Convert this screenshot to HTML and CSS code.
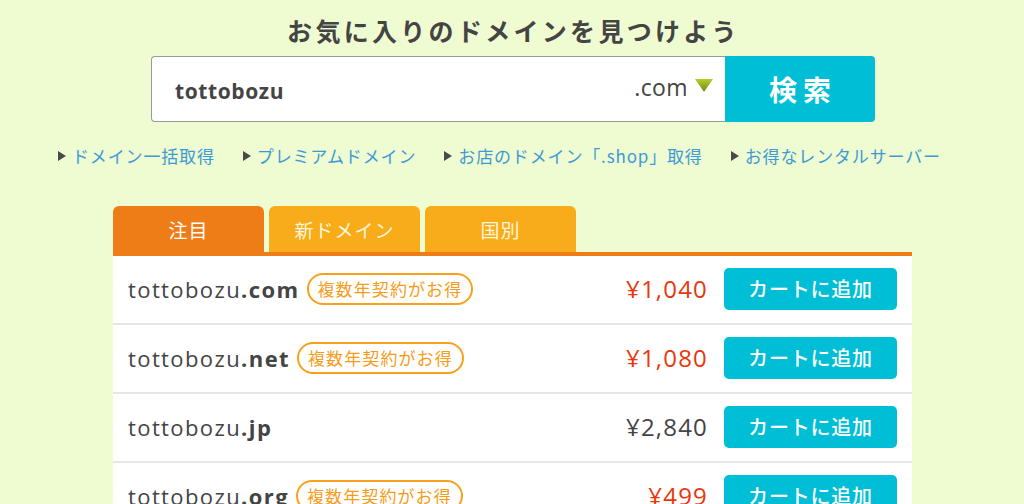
FILE: index.html
```html
<!DOCTYPE html>
<html lang="ja">
<head>
<meta charset="utf-8">
<title>ドメイン検索</title>
<link rel="stylesheet" href="styles.css">
</head>
<body>
<div class="page">
  <h1 class="title">お気に入りのドメインを見つけよう</h1>

  <form class="search">
    <div class="search-input">
      <span class="query">tottobozu</span>
      <span class="tld">.com</span>
      <svg class="tld-arrow" width="18" height="13" viewBox="0 0 18 13">
        <defs>
          <linearGradient id="g" x1="0" y1="0" x2="0" y2="1">
            <stop offset="0" stop-color="#b5cf2a"/>
            <stop offset="1" stop-color="#6f8a12"/>
          </linearGradient>
        </defs>
        <polygon points="0,0 18,0 9,13" fill="url(#g)"/>
      </svg>
    </div>
    <button type="button" class="search-btn">検索</button>
  </form>

  <ul class="links">
    <li><span class="tri"></span>ドメイン一括取得</li>
    <li><span class="tri"></span>プレミアムドメイン</li>
    <li><span class="tri"></span>お店のドメイン「.shop」取得</li>
    <li><span class="tri"></span>お得なレンタルサーバー</li>
  </ul>

  <section class="panel">
    <div class="tabs">
      <div class="tab tab-active">注目</div>
      <div class="tab">新ドメイン</div>
      <div class="tab">国別</div>
    </div>
    <div class="rows">
      <div class="row">
        <div class="domain">tottobozu<b>.com</b></div>
        <span class="badge">複数年契約がお得</span>
        <div class="price sale">¥1,040</div>
        <button type="button" class="cart">カートに追加</button>
      </div>
      <div class="row">
        <div class="domain">tottobozu<b>.net</b></div>
        <span class="badge">複数年契約がお得</span>
        <div class="price sale">¥1,080</div>
        <button type="button" class="cart">カートに追加</button>
      </div>
      <div class="row">
        <div class="domain">tottobozu<b>.jp</b></div>
        <div class="price">¥2,840</div>
        <button type="button" class="cart">カートに追加</button>
      </div>
      <div class="row">
        <div class="domain">tottobozu<b>.org</b></div>
        <span class="badge">複数年契約がお得</span>
        <div class="price sale">¥499</div>
        <button type="button" class="cart">カートに追加</button>
      </div>
    </div>
  </section>
</div>
</body>
</html>
```

FILE: styles.css
```css
* { box-sizing: border-box; }

html, body {
  margin: 0;
  padding: 0;
  height: 100%;
  overflow: hidden;
}

body {
  background: #effbd0;
  font-family: "Noto Sans CJK JP", "Open Sans", sans-serif;
  color: #444;
}

.page {
  display: flex;
  flex-direction: column;
  align-items: center;
  padding-top: 12px;
}

.title {
  margin: 0;
  font-size: 25px;
  line-height: 36px;
  font-weight: bold;
  letter-spacing: 3.3px;
  color: #444;
  text-indent: 3px;
}

.search {
  margin: 8px 0 0 2px;
  display: flex;
  width: 724px;
  height: 66px;
}

.search-input {
  flex: 1;
  display: flex;
  align-items: center;
  background: #fff;
  border: 1px solid #9a9a9a;
  border-right: none;
  border-radius: 4px 0 0 4px;
  padding: 0 12px 0 23px;
}

.query {
  flex: 1;
  font-family: "Open Sans", sans-serif;
  font-weight: bold;
  font-size: 21px;
  letter-spacing: 0.6px;
  color: #444;
  padding-top: 4px;
}

.tld {
  font-family: "Open Sans", sans-serif;
  font-size: 23px;
  letter-spacing: 0.4px;
  color: #444;
  margin-right: 7px;
  margin-top: -4px;
}

.tld-arrow {
  margin-top: -8px;
}

.search-btn {
  width: 150px;
  border: none;
  background: #00bed5;
  color: #fff;
  border-radius: 0 4px 4px 0;
  font-family: "Noto Sans CJK JP", sans-serif;
  font-weight: bold;
  font-size: 28px;
  letter-spacing: 6px;
  text-indent: 6px;
  padding: 0;
}

.links {
  list-style: none;
  margin: 22px 0 0;
  padding: 0 0 0 58px;
  align-self: stretch;
  display: flex;
  gap: 28px;
  font-size: 17px;
  line-height: 24px;
  letter-spacing: 0.85px;
  color: #3d9ad6;
}

.links li {
  display: flex;
  align-items: center;
}

.tri {
  width: 0;
  height: 0;
  border-top: 5px solid transparent;
  border-bottom: 5px solid transparent;
  border-left: 8px solid #4a4a4a;
  margin-right: 6px;
}

.panel {
  margin-top: 38px;
  width: 799px;
  margin-left: 1px;
}

.tabs {
  display: flex;
  gap: 5px;
  border-bottom: 4px solid #ef7d17;
}

.tab {
  width: 151px;
  height: 46px;
  border-radius: 6px 6px 0 0;
  background: #f8ac19;
  color: #fff6dc;
  font-size: 19px;
  letter-spacing: 1px;
  display: flex;
  align-items: center;
  justify-content: center;
}

.tab-active {
  background: #ef7d17;
  color: #fff;
}

.row {
  display: flex;
  align-items: center;
  height: 69px;
  padding: 0 15px 2px;
  background: #fff;
  border-bottom: 2px solid #e6e6e6;
}

.domain {
  font-family: "Open Sans", sans-serif;
  font-size: 22px;
  letter-spacing: 1.4px;
  color: #444;
}

.domain b {
  font-weight: bold;
}

.badge {
  margin-left: 7px;
  height: 32px;
  padding: 0 9px;
  border: 2px solid #f9a11b;
  border-radius: 16px;
  color: #f79c18;
  font-size: 17px;
  letter-spacing: 1.1px;
  display: flex;
  align-items: center;
}

.price {
  margin-left: auto;
  font-family: "Open Sans", sans-serif;
  font-size: 24px;
  letter-spacing: 1.2px;
  color: #444;
}

.price.sale {
  color: #e8370d;
}

.cart {
  margin-left: 16px;
  width: 173px;
  height: 42px;
  border: none;
  border-radius: 5px;
  background: #00bed5;
  color: #fff;
  font-family: "Noto Sans CJK JP", sans-serif;
  font-size: 20px;
  font-weight: 500;
  letter-spacing: 0.8px;
  padding: 0;
}
```
